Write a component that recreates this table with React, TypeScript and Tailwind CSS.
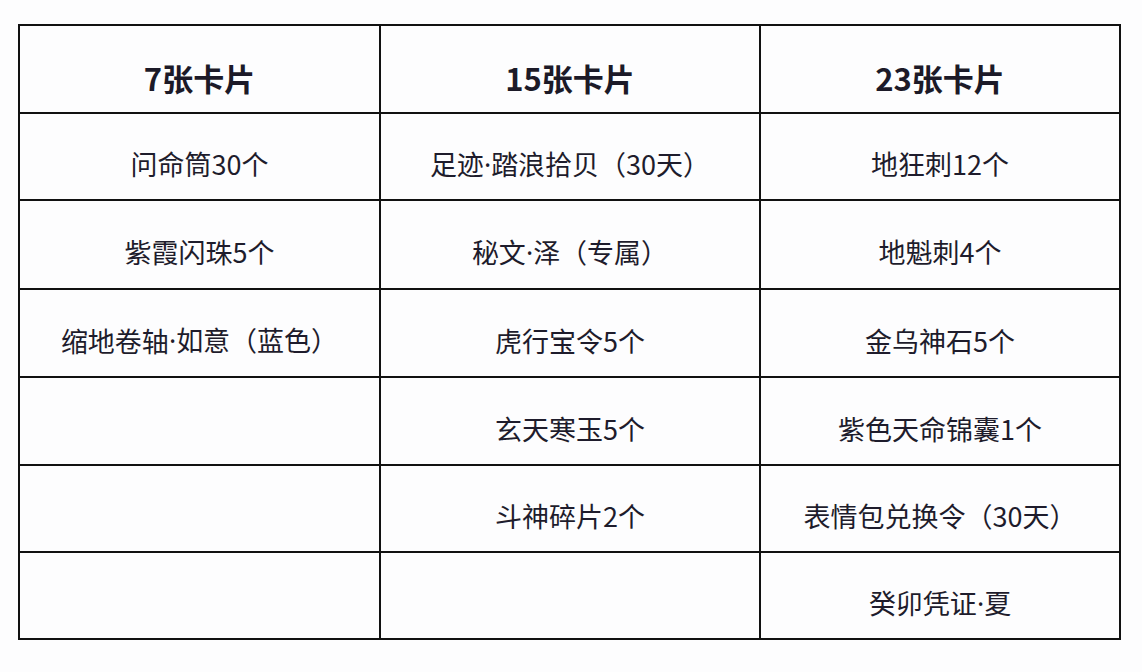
const headers = ["7张卡片", "15张卡片", "23张卡片"]

const rows: string[][] = [
  ["问命筒30个", "足迹·踏浪拾贝（30天）", "地狂刺12个"],
  ["紫霞闪珠5个", "秘文·泽（专属）", "地魁刺4个"],
  ["缩地卷轴·如意（蓝色）", "虎行宝令5个", "金乌神石5个"],
  ["", "玄天寒玉5个", "紫色天命锦囊1个"],
  ["", "斗神碎片2个", "表情包兑换令（30天）"],
  ["", "", "癸卯凭证·夏"],
]

// the middle dot is narrow in the picture, so set it in a latin font
const Cell = ({ text }: { text: string }) => {
  const parts = text.split("·")
  return (
    <>
      {parts.map((p, k) => (
        <span key={k}>
          {k > 0 && <span style={{ fontFamily: '"Noto Sans", sans-serif' }}>·</span>}
          {p}
        </span>
      ))}
    </>
  )
}

const App = () => {
  return (
    <div
      className="w-[1142px] h-[672px] bg-[#fdfdfe] pt-[24px] pl-[18px]"
      style={{ fontFamily: '"Noto Sans CJK SC", "Noto Sans", sans-serif' }}
    >
      <div className="w-[1103px] grid grid-cols-[359px_378px_358px] grid-rows-[86px_85px_87px_86px_86px_85px_85px] gap-[2px] p-[2px] bg-[#111]">
        {headers.map((h) => (
          <div key={h} className="bg-[#fdfdfe] flex items-center justify-center pt-[18px] text-[31px] font-bold text-[#1c1a28]">
            {h}
          </div>
        ))}
        {rows.map((r, i) =>
          r.map((c, j) => (
            <div key={`${i}-${j}`} className="bg-[#fdfdfe] flex items-center justify-center pt-[16px] text-[27px] text-[#1e1c2c]">
              <Cell text={c} />
            </div>
          ))
        )}
      </div>
    </div>
  )
}

export default App
